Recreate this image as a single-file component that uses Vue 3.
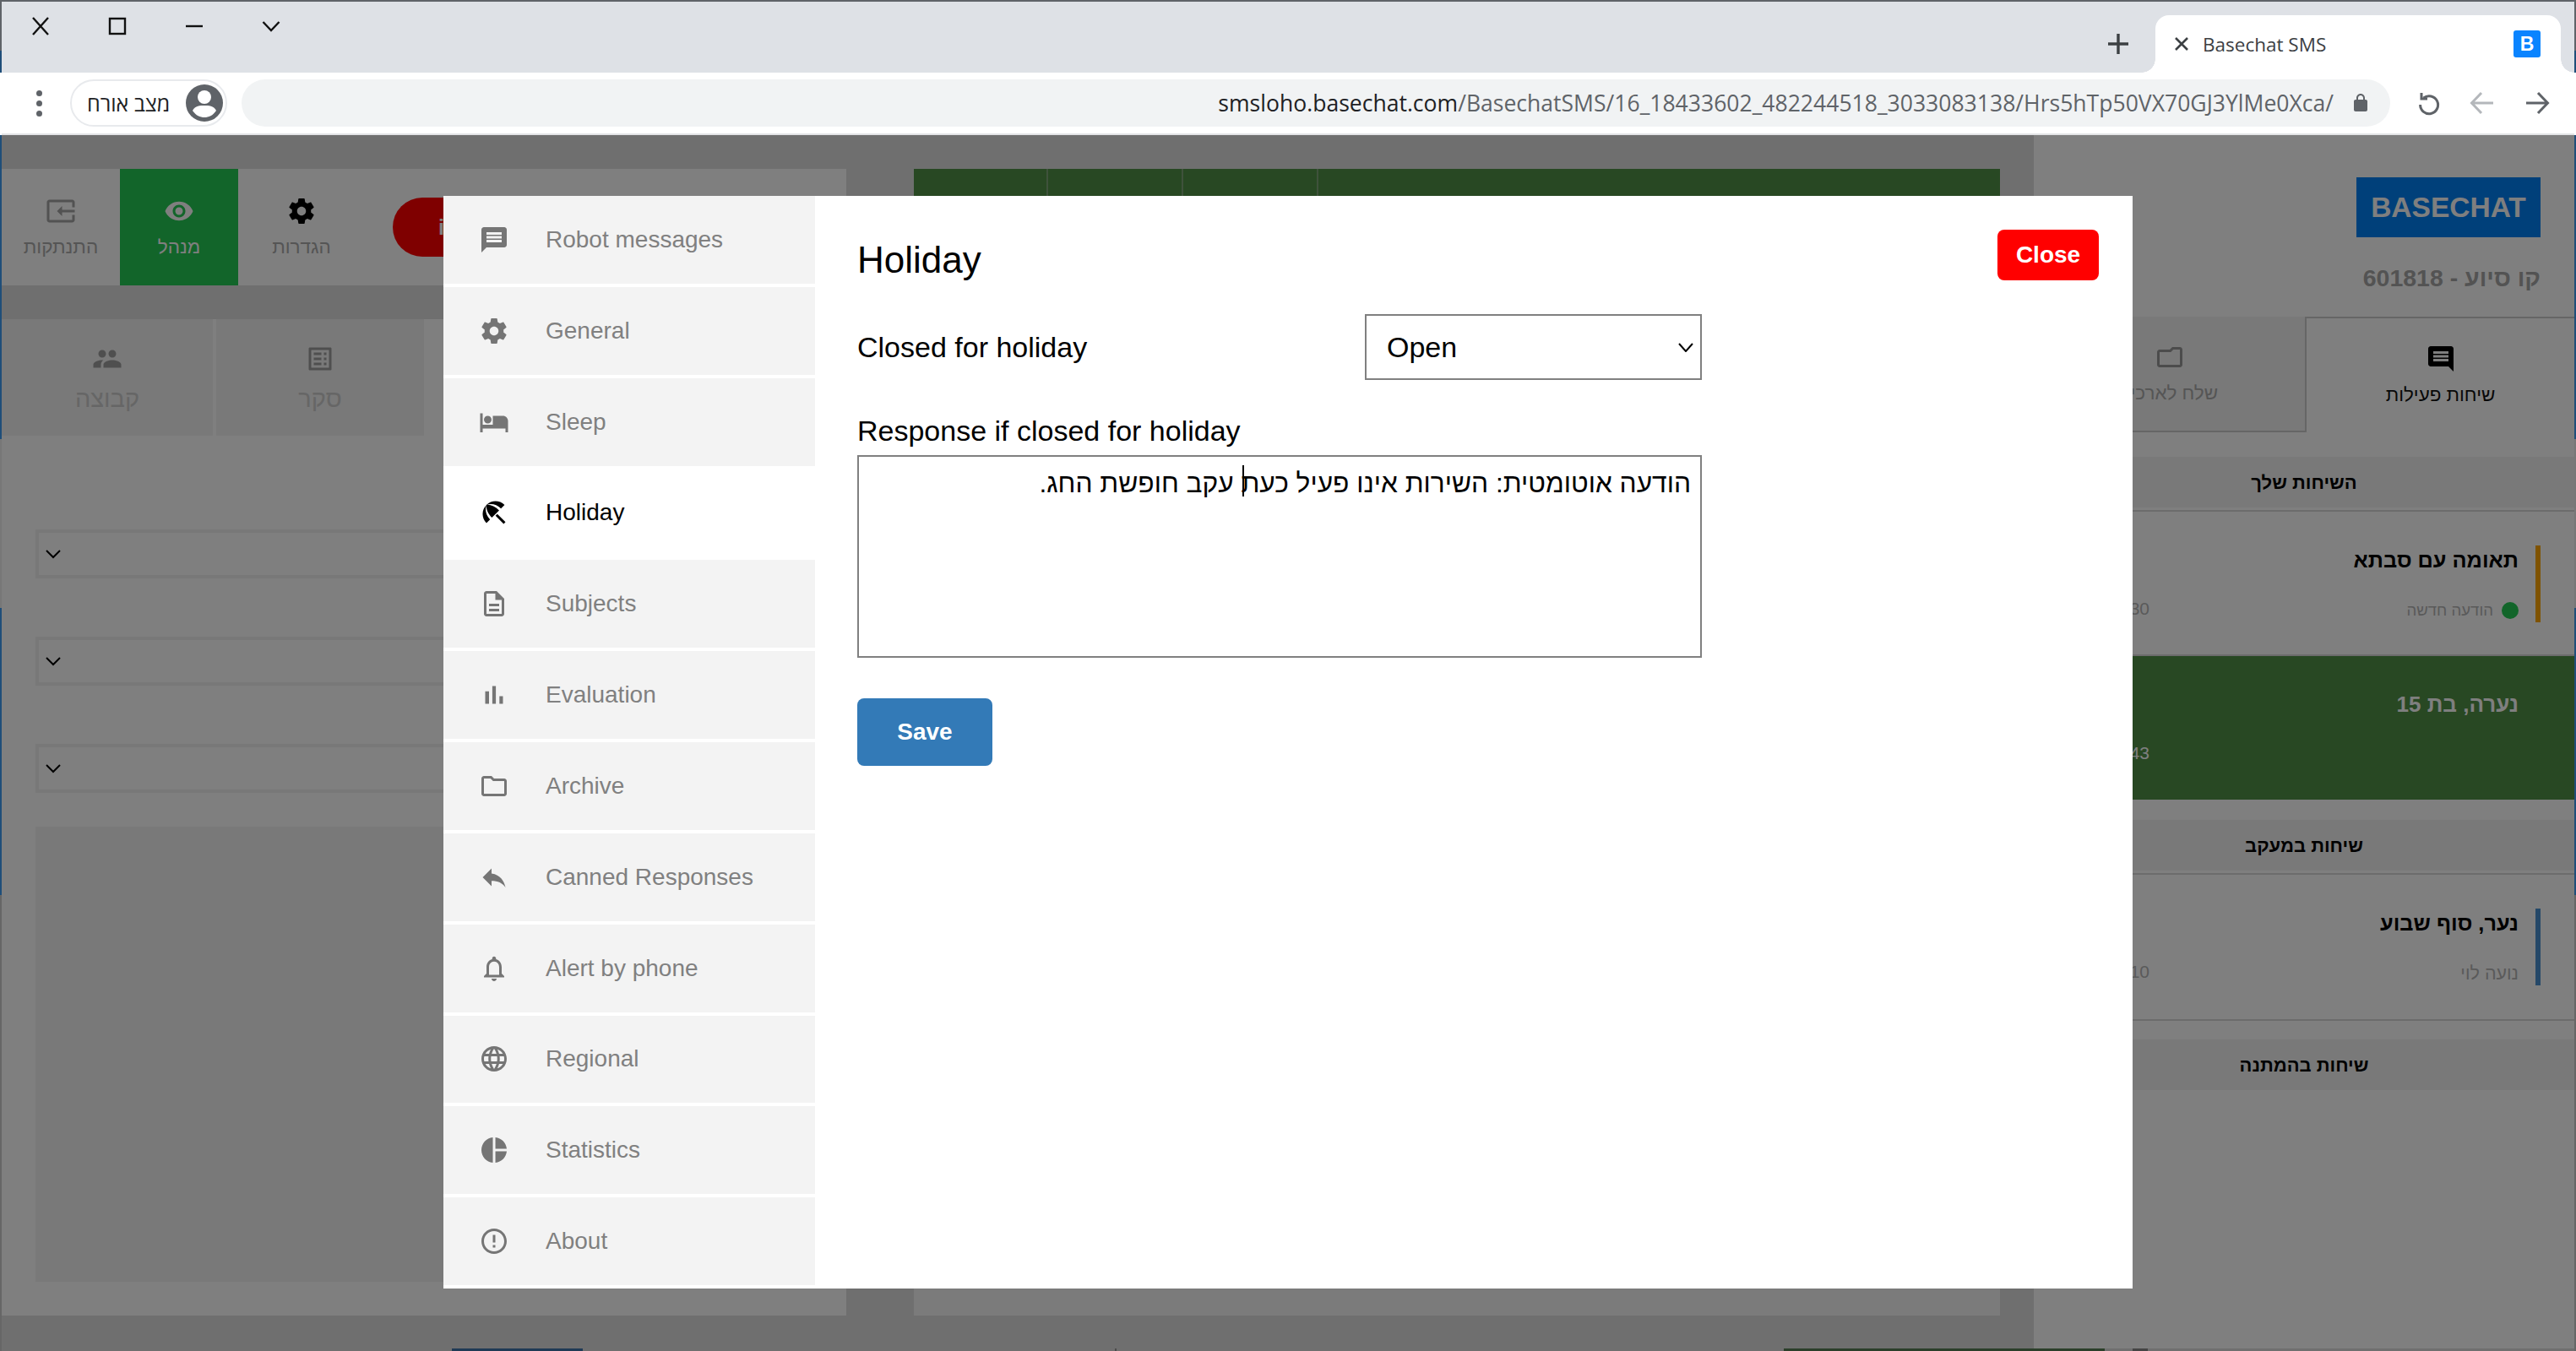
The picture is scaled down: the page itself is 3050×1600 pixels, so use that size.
<script setup>
const P = {
  message: 'M20 2H4c-1.1 0-1.99.9-1.99 2L2 22l4-4h14c1.1 0 2-.9 2-2V4c0-1.1-.9-2-2-2zm-2 12H6v-2h12v2zm0-3H6V9h12v2zm0-3H6V6h12v2z',
  settings: 'M19.43 12.98c.04-.32.07-.64.07-.98s-.03-.66-.07-.98l2.11-1.65c.19-.15.24-.42.12-.64l-2-3.46c-.12-.22-.39-.3-.61-.22l-2.49 1c-.52-.4-1.08-.73-1.69-.98l-.38-2.65C14.46 2.18 14.25 2 14 2h-4c-.25 0-.46.18-.49.42l-.38 2.65c-.61.25-1.17.59-1.69.98l-2.49-1c-.23-.09-.49 0-.61.22l-2 3.46c-.13.22-.07.49.12.64l2.11 1.65c-.04.32-.07.65-.07.98s.03.66.07.98l-2.11 1.65c-.19.15-.24.42-.12.64l2 3.46c.12.22.39.3.61.22l2.49-1c.52.4 1.08.73 1.69.98l.38 2.65c.03.24.24.42.49.42h4c.25 0 .46-.18.49-.42l.38-2.65c.61-.25 1.17-.59 1.69-.98l2.49 1c.23.09.49 0 .61-.22l2-3.46c.12-.22.07-.49-.12-.64l-2.11-1.65zM12 15.5c-1.93 0-3.5-1.57-3.5-3.5s1.57-3.5 3.5-3.5 3.5 1.57 3.5 3.5-1.57 3.5-3.5 3.5z',
  hotel: 'M7 13c1.66 0 3-1.34 3-3S8.66 7 7 7s-3 1.34-3 3 1.34 3 3 3zm12-6h-8v7H3V5H1v15h2v-3h18v3h2v-9c0-2.21-1.79-4-4-4z',
  beach: 'M13.127 14.56l1.43-1.43 6.44 6.443L19.57 21zm4.293-5.73l2.86-2.86c-3.95-3.95-10.35-3.96-14.3-.02 3.93-1.3 8.31-.25 11.44 2.88zM5.95 5.98c-3.94 3.95-3.93 10.35.02 14.3l2.86-2.86C5.7 14.29 4.65 9.91 5.95 5.98zm.02-.02l-.01.01c-.38 3.01 1.17 6.88 4.3 10.02l5.73-5.73c-3.13-3.13-7.01-4.68-10.02-4.3z',
  doc: 'M8 16h8v2H8zm0-4h8v2H8zm6-10H6c-1.1 0-2 .9-2 2v16c0 1.1.89 2 1.99 2H18c1.1 0 2-.9 2-2V8l-6-6zm4 18H6V4h7v5h5v11z',
  chart: 'M5 9.2h3V19H5zM10.6 5h2.8v14h-2.8zm5.6 8H19v6h-2.8z',
  folder: 'M9.17 6l2 2H20v10H4V6h5.17M10 4H4c-1.1 0-1.99.9-1.99 2L2 18c0 1.1.9 2 2 2h16c1.1 0 2-.9 2-2V8c0-1.1-.9-2-2-2h-8l-2-2z',
  reply: 'M10 9V5l-7 7 7 7v-4.1c5 0 8.5 1.6 11 5.1-1-5-4-10-11-11z',
  bell: 'M12 22c1.1 0 2-.9 2-2h-4c0 1.1.89 2 2 2zm6-6v-5c0-3.07-1.64-5.64-4.5-6.32V4c0-.83-.67-1.5-1.5-1.5s-1.5.67-1.5 1.5v.68C7.63 5.36 6 7.92 6 11v5l-2 2v1h16v-1l-2-2zm-2 1H8v-6c0-2.48 1.51-4.5 4-4.5s4 2.02 4 4.5v6z',
  globe: 'M11.99 2C6.47 2 2 6.48 2 12s4.47 10 9.99 10C17.52 22 22 17.52 22 12S17.52 2 11.99 2zm6.93 6h-2.95c-.32-1.25-.78-2.45-1.38-3.56 1.84.63 3.37 1.91 4.33 3.56zM12 4.04c.83 1.2 1.48 2.53 1.91 3.96h-3.82c.43-1.43 1.08-2.76 1.91-3.96zM4.26 14C4.1 13.36 4 12.69 4 12s.1-1.36.26-2h3.38c-.08.66-.14 1.32-.14 2 0 .68.06 1.34.14 2H4.26zm.82 2h2.95c.32 1.25.78 2.45 1.38 3.56-1.84-.63-3.37-1.9-4.33-3.56zm2.95-8H5.08c.96-1.66 2.49-2.93 4.33-3.56C8.81 5.55 8.35 6.75 8.03 8zM12 19.96c-.83-1.2-1.48-2.53-1.91-3.96h3.82c-.43 1.43-1.08 2.76-1.91 3.96zM14.34 14H9.66c-.09-.66-.16-1.32-.16-2 0-.68.07-1.35.16-2h4.68c.09.65.16 1.32.16 2 0 .68-.07 1.34-.16 2zm.25 5.56c.6-1.11 1.06-2.31 1.38-3.56h2.95c-.96 1.65-2.49 2.93-4.33 3.56zM16.36 14c.08-.66.14-1.32.14-2 0-.68-.06-1.34-.14-2h3.38c.16.64.26 1.31.26 2s-.1 1.36-.26 2h-3.38z',
  pie: 'M11 2v20c-5.07-.5-9-4.79-9-10s3.93-9.5 9-10zm2.03 0v8.99H22c-.47-4.74-4.24-8.52-8.97-8.99zm0 11.01V22c4.74-.47 8.5-4.25 8.97-8.99h-8.97z',
  info: 'M11 15h2v2h-2zm0-8h2v6h-2zm.99-5C6.47 2 2 6.48 2 12s4.47 10 9.99 10C17.52 22 22 17.52 22 12S17.52 2 11.99 2zM12 20c-4.42 0-8-3.58-8-8s3.58-8 8-8 8 3.58 8 8-3.58 8-8 8z',
  input: 'M21 3.01H3c-1.1 0-2 .9-2 2V9h2V4.99h18v14.03H3V15H1v4.01c0 1.1.9 1.98 2 1.98h18c1.1 0 2-.88 2-1.98v-14c0-1.11-.9-2-2-2zM11 16l4-4-4-4v3H1v2h10v3z',
  eye: 'M12 4.5C7 4.5 2.73 7.61 1 12c1.73 4.39 6 7.5 11 7.5s9.27-3.11 11-7.5c-1.73-4.39-6-7.5-11-7.5zM12 17c-2.76 0-5-2.24-5-5s2.24-5 5-5 5 2.24 5 5-2.24 5-5 5zm0-8c-1.66 0-3 1.34-3 3s1.34 3 3 3 3-1.34 3-3-1.34-3-3-3z',
  people: 'M16 11c1.66 0 2.99-1.34 2.99-3S17.66 5 16 5c-1.66 0-3 1.34-3 3s1.34 3 3 3zm-8 0c1.66 0 2.99-1.34 2.99-3S9.66 5 8 5C6.34 5 5 6.34 5 8s1.34 3 3 3zm0 2c-2.33 0-7 1.17-7 3.5V19h14v-2.5c0-2.33-4.67-3.5-7-3.5zm8 0c-.29 0-.62.02-.97.05 1.16.84 1.97 1.97 1.97 3.45V19h6v-2.5c0-2.33-4.67-3.5-7-3.5z',
  list: 'M19 5v14H5V5h14m1.1-2H3.9c-.5 0-.9.4-.9.9v16.2c0 .4.4.9.9.9h16.2c.4 0 .9-.5.9-.9V3.9c0-.5-.5-.9-.9-.9zM11 7h6v2h-6V7zm0 4h6v2h-6v-2zm0 4h6v2h-6zM7 7h2v2H7zm0 4h2v2H7zm0 4h2v2H7z',
  lock: 'M18 8h-1V6c0-2.76-2.24-5-5-5S7 3.24 7 6v2H6c-1.1 0-2 .9-2 2v10c0 1.1.9 2 2 2h12c1.1 0 2-.9 2-2V10c0-1.1-.9-2-2-2zM9 6c0-1.66 1.34-3 3-3s3 1.34 3 3v2H9V6z'
}
const menu = [
  ['Robot messages', P.message], ['General', P.settings], ['Sleep', P.hotel], ['Holiday', P.beach],
  ['Subjects', P.doc], ['Evaluation', P.chart], ['Archive', P.folder], ['Canned Responses', P.reply],
  ['Alert by phone', P.bell], ['Regional', P.globe], ['Statistics', P.pie], ['About', P.info]
]
const message = 'הודעה אוטומטית: השירות אינו פעיל כעת עקב חופשת החג.'
const url = '/BasechatSMS/16_18433602_482244518_3033083138/Hrs5hTp50VX70GJ3YlMe0Xca/'
</script>

<template>
  <div class="screen">
    <header class="tabbar">
      <div class="winbtn"><svg width="22" height="22" viewBox="0 0 22 22"><path d="M2 1 L20 21 M20 1 L2 21" class="ln" /></svg></div>
      <div class="winbtn"><svg width="22" height="22" viewBox="0 0 22 22"><rect x="2" y="2" width="18" height="18" class="ln" /></svg></div>
      <div class="winbtn"><svg width="22" height="22" viewBox="0 0 22 22"><path d="M1 11 H21" class="ln" /></svg></div>
      <div class="winbtn"><svg width="22" height="14" viewBox="0 0 22 14"><path d="M1.5 2 L11 12 L20.5 2" class="ln" /></svg></div>
      <div class="plus"><svg width="24" height="24" viewBox="0 0 24 24"><path d="M12 0 V24 M0 12 H24" /></svg></div>
      <div class="tab">
        <svg class="tabx" width="16" height="16" viewBox="0 0 16 16"><path d="M1 1 L15 15 M15 1 L1 15" /></svg>
        <span class="tabtitle">Basechat SMS</span>
        <span class="favicon">B</span>
      </div>
    </header>

    <div class="toolbar">
      <div class="kebab"><i></i><i></i><i></i></div>
      <div class="chip">
        <span class="chiptext" dir="rtl">מצב אורח</span>
        <svg class="avatar" width="44" height="44" viewBox="0 0 44 44">
          <circle cx="22" cy="22" r="22" fill="#5f6368" />
          <circle cx="22" cy="15" r="8" fill="#fff" />
          <path d="M8 31 C11 25 17 25 22 25 C27 25 33 25 36 31 C32 37 27 39 22 39 C17 39 12 37 8 31 Z" fill="#fff" />
        </svg>
      </div>
      <div class="omnibox">
        <span class="url"><b>smsloho.basechat.com</b>{{ url }}</span>
        <svg class="lock" width="24" height="24" viewBox="0 0 24 24"><path :d="P.lock" /></svg>
      </div>
      <svg class="navicon reload" width="32" height="32" viewBox="0 0 32 32"><path d="M9.5 10 A10.5 10.5 0 1 1 5.6 18" /><path d="M7 4 V11 H14" /></svg>
      <svg class="navicon back" width="30" height="30" viewBox="0 0 30 30"><path d="M28 15 H3 M14 3 L2.5 15 L14 27" /></svg>
      <svg class="navicon fwd" width="30" height="30" viewBox="0 0 30 30"><path d="M2 15 H27 M16 3 L27.5 15 L16 27" /></svg>
    </div>

    <main class="page">
      <div class="cols">
        <section class="left">
          <div class="navcard">
            <div class="navitem dimtext">
              <svg class="flip" width="36" height="36" viewBox="0 0 24 24"><path :d="P.input" /></svg>
              <span>התנתקות</span>
            </div>
            <div class="navitem on">
              <svg width="36" height="36" viewBox="0 0 24 24"><path :d="P.eye" /></svg>
              <span>מנהל</span>
            </div>
            <div class="navitem wide dimtext">
              <svg class="blackicon" width="36" height="36" viewBox="0 0 24 24"><path :d="P.settings" /></svg>
              <span>הגדרות</span>
            </div>
            <div class="pill"><span>i</span></div>
          </div>
          <div class="leftbody">
            <div class="lefttabs">
              <div class="ltab ltab1">
                <svg class="flip" width="36" height="36" viewBox="0 0 24 24"><path :d="P.people" /></svg>
                <span>קבוצה</span>
              </div>
              <div class="ltab ltab2">
                <svg class="flip" width="36" height="36" viewBox="0 0 24 24"><path :d="P.list" /></svg>
                <span>סקר</span>
              </div>
            </div>
            <div class="pick first"><svg width="18" height="12" viewBox="0 0 18 12"><path d="M1 2 L9 10 L17 2" /></svg></div>
            <div class="pick"><svg width="18" height="12" viewBox="0 0 18 12"><path d="M1 2 L9 10 L17 2" /></svg></div>
            <div class="pick"><svg width="18" height="12" viewBox="0 0 18 12"><path d="M1 2 L9 10 L17 2" /></svg></div>
            <div class="bigbox"></div>
          </div>
        </section>

        <section class="center">
          <div class="greenhead"><span></span><span></span><span></span><span></span></div>
        </section>

        <aside class="right">
          <div class="logo">BASECHAT</div>
          <div class="hotline" dir="rtl">קו סיוע - 601818</div>
          <div class="rtabs">
            <div class="rtab inactive">
              <svg class="flip" width="36" height="36" viewBox="0 0 24 24"><path :d="P.folder" /></svg>
              <span>שלח לארכיון</span>
            </div>
            <div class="rtab active">
              <svg class="flip" width="36" height="36" viewBox="0 0 24 24"><path :d="P.message" /></svg>
              <span>שיחות פעילות</span>
            </div>
          </div>

          <div class="sechead first" dir="rtl">השיחות שלך</div>
          <div class="chat opening">
            <div class="time">12:30</div>
            <div class="info" dir="rtl">
              <div class="title">תאומה עם סבתא</div>
              <div class="sub"><i class="dot"></i>הודעה חדשה</div>
            </div>
            <div class="bar orange"></div>
          </div>
          <div class="chat selected">
            <div class="time">11:43</div>
            <div class="info" dir="rtl">
              <div class="title">נערה, בת 15</div>
            </div>
            <div class="bar none"></div>
          </div>

          <div class="sechead second" dir="rtl">שיחות במעקב</div>
          <div class="chat last">
            <div class="time">12:10</div>
            <div class="info" dir="rtl">
              <div class="title">נער, סוף שבוע</div>
              <div class="sub plain">נועה לוי</div>
            </div>
            <div class="bar blue"></div>
          </div>

          <div class="sechead third" dir="rtl">שיחות בהמתנה</div>
        </aside>
      </div>

      <div class="peek">
        <span class="pk1"></span><span class="pk2"></span><span class="pk3"></span><span class="pk4"></span>
      </div>

      <div class="overlay"></div>

      <div class="modal">
        <nav class="sidebar">
          <div v-for="m in menu" :key="m[0]" class="mitem" :class="{ active: m[0] === 'Holiday' }">
            <svg width="36" height="36" viewBox="0 0 24 24"><path :d="m[1]" /></svg>
            <span>{{ m[0] }}</span>
          </div>
        </nav>
        <div class="content">
          <div class="head">
            <h2>Holiday</h2>
            <button class="close">Close</button>
          </div>
          <div class="row">
            <label>Closed for holiday</label>
            <div class="selwrap">
              <select class="sel"><option>Open</option></select>
              <svg class="selarrow" width="18" height="11" viewBox="0 0 18 11"><path d="M1 1 L9 10 L17 1" /></svg>
            </div>
          </div>
          <label class="resp">Response if closed for holiday</label>
          <div class="areawrap">
            <textarea dir="rtl" readonly :value="message"></textarea>
            <i class="caret"></i>
          </div>
          <button class="save">Save</button>
        </div>
      </div>
    </main>
  </div>
</template>

<style>
html, body { margin: 0; padding: 0; overflow: hidden; background: #fff; }
</style>

<style scoped>
* { box-sizing: border-box; }
.screen {
  width: 3050px; height: 1600px; padding: 2px 2px 0 2px; overflow: hidden;
  font-family: "Liberation Sans", Arial, sans-serif;
  display: flex; flex-direction: column;
  background: linear-gradient(to bottom, #5f6368 0 60px, #1f4e79 60px 86px, #fff 86px 160px, #1f4e79 160px 520px, #777 520px 720px, #1f4e79 720px 1060px, #666 1060px);
}
.tabbar { height: 84px; background: #dee1e6; display: flex; align-items: flex-start; flex: none; }
.winbtn { width: 91px; height: 58px; display: flex; align-items: center; justify-content: center; flex: none; }
.ln { fill: none; stroke: #111; stroke-width: 2.4; }
.plus { margin-left: auto; margin-right: 32px; margin-top: 38px; height: 24px; width: 24px; }
.plus svg { display: block; }
.plus path { stroke: #3c4043; stroke-width: 3.4; }
.tab {
  position: relative; width: 480px; height: 68px; margin-top: 16px; margin-right: 16px; background: #fff;
  border-radius: 16px 16px 0 0; display: flex; align-items: center; padding: 0 24px 0 23px;
}
.tab::before, .tab::after { content: ""; position: absolute; bottom: 0; width: 16px; height: 16px; }
.tab::before { left: -16px; background: radial-gradient(circle at 0 0, transparent 15.5px, #fff 16px); }
.tab::after { right: -16px; background: radial-gradient(circle at 100% 0, transparent 15.5px, #fff 16px); }
.tabx path { stroke: #3c4043; stroke-width: 2.6; }
.tabtitle { margin-left: 17px; font: 22.5px "Open Sans", sans-serif; color: #3c4043; }
.favicon {
  margin-left: auto; width: 32px; height: 32px; background: #0a84ff; color: #fff; border-radius: 3px;
  font: bold 23px/32px "Liberation Sans", sans-serif; text-align: center;
}

.toolbar { height: 74px; background: #fff; border-bottom: 2px solid #e3e4e6; display: flex; align-items: center; flex: none; }
.kebab { width: 81px; padding-left: 7px; display: flex; flex-direction: column; align-items: center; gap: 5px; flex: none; }
.kebab i { display: block; width: 7px; height: 7px; border-radius: 50%; background: #5f6368; }
.chip {
  width: 186px; height: 56px; border: 2px solid #e8eaed; border-radius: 28px; display: flex; align-items: center;
  justify-content: space-between; padding: 0 3px 0 18px; flex: none; background: #fff;
}
.chiptext { font: 25px "Open Sans", "Noto Sans", "Liberation Sans", sans-serif; color: #202124; white-space: nowrap; }
.avatar { flex: none; }
.omnibox {
  margin-left: 17px; width: 2544px; height: 56px; border-radius: 28px; background: #f1f3f4; flex: none;
  display: flex; align-items: center; justify-content: flex-end; padding-right: 23px;
}
.url { font: 26.55px "Open Sans", sans-serif; color: #5f6368; white-space: nowrap; }
.url b { font-weight: 400; color: #202124; }
.lock { margin-left: 20px; fill: #5f6368; }
.navicon { fill: none; stroke: #5f6368; stroke-width: 3; flex: none; }
.reload { margin-left: 30px; }
.back { margin-left: 32px; stroke: #b4b7bb; }
.fwd { margin-left: 35px; }

.page { position: relative; flex: 1; background: #dedede; display: flex; flex-direction: column; overflow: hidden; }
.cols { height: 1437px; display: flex; flex: none; }
.peek { height: 3px; display: flex; flex: none; }
.peek span { display: block; height: 3px; flex: none; }
.pk1 { width: 155px; margin-left: 533px; background: #3e74aa; }
.pk2 { width: 2px; margin-left: 630px; background: #999; }
.pk3 { width: 380px; margin-left: 790px; background: #567e54; }
.pk4 { width: 18px; margin-left: 33px; background: #888; }
.flip { transform: scaleX(-1); }

.left { width: 1000px; margin: 40px 0 39px; display: flex; flex-direction: column; flex: none; }
.navcard { position: relative; height: 138px; background: #fff; display: flex; flex: none; overflow: hidden; }
.navitem { width: 140px; display: flex; flex-direction: column; align-items: center; padding-top: 32px; font-size: 22.5px; gap: 10px; }
.navitem svg { display: block; fill: #a4a4a4; }
.navitem span { line-height: 30px; }
.dimtext { color: #aaa; }
.navitem.on { background: #25ca54; color: #fff; }
.navitem.on svg { fill: #fff; }
.navitem.wide { width: 150px; }
.navitem .blackicon { fill: #000; }
.pill {
  width: 200px; height: 70px; margin: 34px 0 0 33px; background: #f00; border-radius: 35px 0 0 35px;
  color: #fff; font: bold 26px/70px "Liberation Sans", sans-serif; padding-left: 54px;
}
.leftbody { flex: 1; margin-top: 40px; background: #fff; display: flex; flex-direction: column; padding: 0 40px 40px; }
.lefttabs { height: 138px; margin: 0 -40px; display: flex; flex: none; gap: 4px; }
.ltab { background: #f2f2f2; display: flex; flex-direction: column; align-items: center; padding-top: 29px; color: #ccc; font-size: 29px; }
.ltab svg { display: block; fill: #9e9e9e; }
.ltab span { line-height: 46px; margin-top: 6px; }
.ltab1 { width: 250px; }
.ltab2 { width: 246px; }
.pick { height: 58px; border: 4px solid #f0f0f0; margin-top: 69px; display: flex; align-items: center; padding-left: 8px; flex: none; }
.pick.first { margin-top: 111px; }
.pick svg path { fill: none; stroke: #000; stroke-width: 2; }
.bigbox { flex: 1; margin-top: 40px; background: #f2f2f2; }

.center { width: 1286px; margin: 40px 40px 39px 80px; background: #f6f6f6; flex: none; }
.greenhead { height: 100px; background: #509046; display: flex; }
.greenhead span { width: 160px; border-right: 2px solid #7fa578; }
.greenhead span:first-child { width: 159px; }
.greenhead span:last-child { flex: 1; border: 0; }

.right { flex: 1; background: #fff; display: flex; flex-direction: column; }
.logo {
  align-self: flex-end; width: 218px; height: 71px; margin: 50px 40px 0 0; background: #0080f5; color: #fff;
  font: bold 33.5px/71px "Liberation Sans", sans-serif; text-align: center;
}
.hotline { margin: 30px 40px 0 0; font: bold 28.5px/36px "Liberation Sans", sans-serif; color: #a6a6a6; }
.rtabs { display: flex; height: 137px; margin-top: 28px; flex: none; }
.rtab { display: flex; flex-direction: column; align-items: center; padding-top: 30px; font-size: 22.4px; }
.rtab svg { display: block; }
.rtab span { line-height: 42px; margin-top: 4px; white-space: nowrap; }
.rtab.inactive { width: 321px; background: #f2f2f2; border-bottom: 2px solid #ccc; color: #aaa; }
.rtab.inactive svg { fill: #999; }
.rtab.active { flex: 1; border: 2px solid #ccc; border-width: 2px 0 0 2px; color: #111; }
.rtab.active svg { fill: #000; }
.sechead { height: 60px; background: #f2f2f2; text-align: center; font: bold 22px/62px "Liberation Sans", sans-serif; color: #000; flex: none; }
.sechead.first { margin-top: 29px; margin-bottom: 3px; }
.sechead.second { margin-top: 24px; margin-bottom: 3px; }
.sechead.third { margin-top: 22px; }
.chat { height: 171px; border-top: 2px solid #d8d8d8; display: flex; align-items: center; padding-right: 40px; flex: none; }
.chat.opening { padding-top: 2px; }
.chat.selected { height: 172px; background: #509046; }
.chat.last { height: 175px; border-bottom: 2px solid #d8d8d8; }
.time { width: 137px; height: 91px; line-height: 32px; font-size: 21px; color: #b4b4b4; text-align: right; display: flex; align-items: flex-end; justify-content: flex-end; white-space: nowrap; }
.selected .time { color: #fff; }
.info { flex: 1; height: 91px; display: flex; flex-direction: column; justify-content: space-between; }
.title { font: bold 25.3px/34px "Liberation Sans", sans-serif; color: #000; }
.selected .title { color: #fff; font-size: 26px; }
.sub { display: flex; align-items: center; gap: 10px; font-size: 18.6px; line-height: 28px; color: #b4b4b4; }
.sub.plain { font-size: 21.5px; }
.dot { width: 20px; height: 20px; border-radius: 50%; background: #25ca54; flex: none; }
.bar { width: 6px; height: 91px; margin-left: 20px; flex: none; }
.bar.orange { background: #ffa700; }
.bar.blue { background: #4a90d0; }
.bar.none { background: transparent; }

.overlay { position: absolute; inset: 0; background: rgba(0, 0, 0, .5); }
.modal {
  position: absolute; left: 523px; top: 72px; width: 2000px; height: 1294px; background: #fff;
  display: grid; grid-template-columns: 440px 1fr;
}
.sidebar { display: grid; grid-template-rows: repeat(12, 1fr); }
.mitem {
  background: #f3f3f3; border-bottom: 4px solid #fff; display: flex; align-items: center; padding-left: 42px;
  font-size: 28px; color: #808080;
}
.mitem svg { fill: #757575; flex: none; }
.mitem span { margin-left: 43px; }
.mitem.active { background: #fff; color: #000; }
.mitem.active svg { fill: #000; }
.content { padding: 0 0 0 50px; color: #000; }
.head { height: 140px; display: flex; justify-content: space-between; align-items: flex-start; padding: 40px 40px 0 0; }
.head h2 { margin: 10px 0 0; font-weight: 400; font-size: 44px; line-height: 52px; }
button { border: 0; color: #fff; font: bold 28px "Liberation Sans", sans-serif; border-radius: 8px; padding: 0; }
.close { width: 120px; height: 60px; background: #f00; }
.row { width: 1000px; display: grid; grid-template-columns: 601px 399px; align-items: center; height: 78px; }
label { font-size: 34px; line-height: 40px; }
.selwrap { position: relative; height: 78px; }
.sel {
  display: block; appearance: none; height: 78px; width: 399px; border: 2px solid #808080; background: #fff;
  font: 34px "Liberation Sans", sans-serif; padding-left: 24px; border-radius: 0; color: #000; outline: 0;
}
.selarrow { position: absolute; right: 10px; top: 34px; }
.selarrow path { fill: none; stroke: #000; stroke-width: 2; }
.resp { display: block; margin-top: 40px; margin-bottom: 9px; }
.areawrap { position: relative; width: 1000px; height: 240px; }
textarea {
  display: block; width: 100%; height: 100%; border: 2px solid #808080; padding: 14px 11px; resize: none; outline: 0;
  font: 31.7px/34px "Liberation Sans", sans-serif; color: #000; background: #fff; border-radius: 0;
}
.caret { position: absolute; left: 456px; top: 12px; width: 2px; height: 37px; background: #000; }
.save { display: block; margin-top: 48px; width: 160px; height: 80px; background: #337ab7; }
</style>
